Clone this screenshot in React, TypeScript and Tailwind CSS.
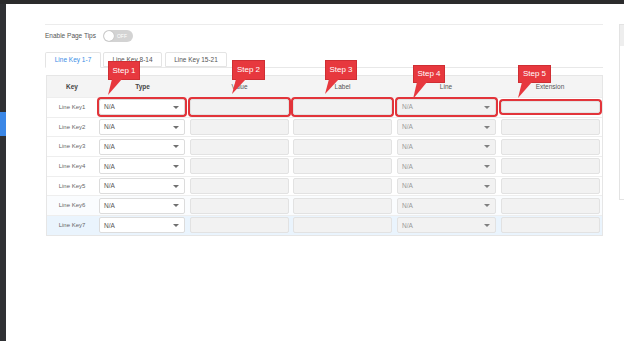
import React from "react";

const rows = ["Line Key1", "Line Key2", "Line Key3", "Line Key4", "Line Key5", "Line Key6", "Line Key7"];

function Caret({ color }: { color: string }) {
  return (
    <span
      className="ml-auto mr-[5px] w-0 h-0 border-l-[3px] border-r-[3px] border-t-[3px] border-l-transparent border-r-transparent"
      style={{ borderTopColor: color }}
    />
  );
}

const callouts = [
  { x: 108, y: 61, w: 32, h: 19, label: "Step 1", tail: "112,79 122,79 108,95" },
  { x: 232, y: 60, w: 33, h: 20, label: "Step 2", tail: "236,79 246,79 232,94" },
  { x: 325, y: 60, w: 32, h: 20, label: "Step 3", tail: "329,79 339,79 325,94" },
  { x: 413, y: 65, w: 32, h: 18, label: "Step 4", tail: "417,82 427,82 413,99" },
  { x: 518, y: 65, w: 33, h: 18, label: "Step 5", tail: "522,82 532,82 518,98" },
];

export default function App() {
  return (
    <div className="relative w-[624px] h-[341px] bg-white overflow-hidden font-['Liberation_Sans',Arial,sans-serif] text-[#555]">
      <div className="h-[4px] bg-[#2b2b2c]" />
      <div className="flex h-[337px] w-[624px] overflow-hidden">
        <div className="w-[6px] shrink-0 bg-[#303134] flex flex-col">
          <div className="h-[108px]" />
          <div className="h-[24px] bg-[#3b87e6]" />
        </div>
        <div className="flex shrink-0 pl-[39px] pt-[20px]">
          <div className="w-[558px] shrink-0">
            <div className="border-t border-[#ececec]" />
            <div className="mt-[5px] flex items-center h-[12px]">
              <span className="text-[6.5px] text-[#555] leading-none">Enable Page Tips</span>
              <div className="ml-[7px] w-[30px] h-[12px] rounded-full bg-[#d3d3d3] flex items-center pl-[1px]">
                <div className="w-[10px] h-[10px] rounded-full bg-white shadow-[0_0_1px_rgba(0,0,0,0.3)]" />
                <span className="ml-[3px] text-[5px] text-white leading-none">OFF</span>
              </div>
            </div>
            <div className="mt-[10px] flex h-[16px] border-b border-[#e8e8e8]">
              <div className="w-[56px] -mb-px border border-[#e4e4e4] border-b-white bg-white rounded-t-[2px] flex items-center justify-center text-[6.5px] text-[#3a8ee6]">
                Line Key 1-7
              </div>
              <div className="ml-[2px] w-[59px] border border-[#e4e4e4] rounded-t-[2px] flex items-center justify-center text-[6.5px] text-[#555]">
                Line Key 8-14
              </div>
              <div className="ml-[3px] w-[62px] border border-[#e4e4e4] rounded-t-[2px] flex items-center justify-center text-[6.5px] text-[#555]">
                Line Key 15-21
              </div>
            </div>
            <div className="mt-[7px] ml-px w-[557px] border border-[#e6e6e6]">
              <div className="grid grid-cols-[50px_91px_103px_103px_104px_104px] h-[21px] bg-[#f4f4f4] text-[6.5px] items-center text-center">
                <div className="text-[#444] font-bold">Key</div>
                <div className="text-[#444] font-bold">Type</div>
                <div className="text-[#555]">Value</div>
                <div className="text-[#555]">Label</div>
                <div className="text-[#555]">Line</div>
                <div className="text-[#555]">Extension</div>
              </div>
              {rows.map((r, i) => {
                const first = i === 0;
                const bg = i === 6 ? "bg-[#eaf4fd]" : i === 5 ? "bg-[#fafcfe]" : "bg-white";
                const red = first ? "ring-2 ring-[#e2343a]" : "";
                return (
                  <div
                    key={r}
                    className={`grid grid-cols-[50px_91px_103px_103px_104px_104px] h-[19.7px] items-center border-t border-[#eeeeee] ${bg}`}
                  >
                    <div className="text-center text-[6px] text-[#666]">{r}</div>
                    <div className="pl-[2px] pr-[3px]">
                      <div className={`h-[16px] rounded-[2px] border border-[#dcdcdc] bg-white flex items-center pl-[4px] text-[6.5px] text-[#555] ${red}`}>
                        N/A
                        <Caret color="#707070" />
                      </div>
                    </div>
                    <div className="px-[2px]">
                      <div className={`h-[16px] rounded-[2px] border border-[#e2e2e2] bg-[#f2f2f2] ${red}`} />
                    </div>
                    <div className="px-[2px]">
                      <div className={`h-[16px] rounded-[2px] border border-[#e2e2e2] bg-[#f2f2f2] ${red}`} />
                    </div>
                    <div className="pl-[3px] pr-[2px]">
                      <div className={`h-[16px] rounded-[2px] border border-[#e2e2e2] bg-[#f2f2f2] flex items-center pl-[4px] text-[6.5px] text-[#999] ${red}`}>
                        N/A
                        <Caret color="#808080" />
                      </div>
                    </div>
                    <div className="pl-[3px] pr-[2px]">
                      <div
                        className={`${first ? "h-[12px]" : "h-[16px]"} rounded-[2px] border border-[#e2e2e2] bg-[#f2f2f2] ${red}`}
                      />
                    </div>
                  </div>
                );
              })}
            </div>
          </div>
          <div className="ml-[16px] w-[20px] shrink-0 h-[176px] border border-[#e3e3e3]">
            <div className="h-[21px] bg-[#eeeeee]" />
          </div>
        </div>
      </div>

      {callouts.map((c) => (
        <div
          key={c.label}
          className="absolute bg-[#e7383e] border border-[#cf2e33] text-white text-[8px] flex items-center justify-center leading-none"
          style={{ left: c.x, top: c.y, width: c.w, height: c.h }}
        >
          {c.label}
        </div>
      ))}
      <svg className="absolute inset-0 pointer-events-none" width="624" height="341">
        {callouts.map((c) => (
          <polygon key={c.label} points={c.tail} fill="#e7383e" />
        ))}
      </svg>
    </div>
  );
}
